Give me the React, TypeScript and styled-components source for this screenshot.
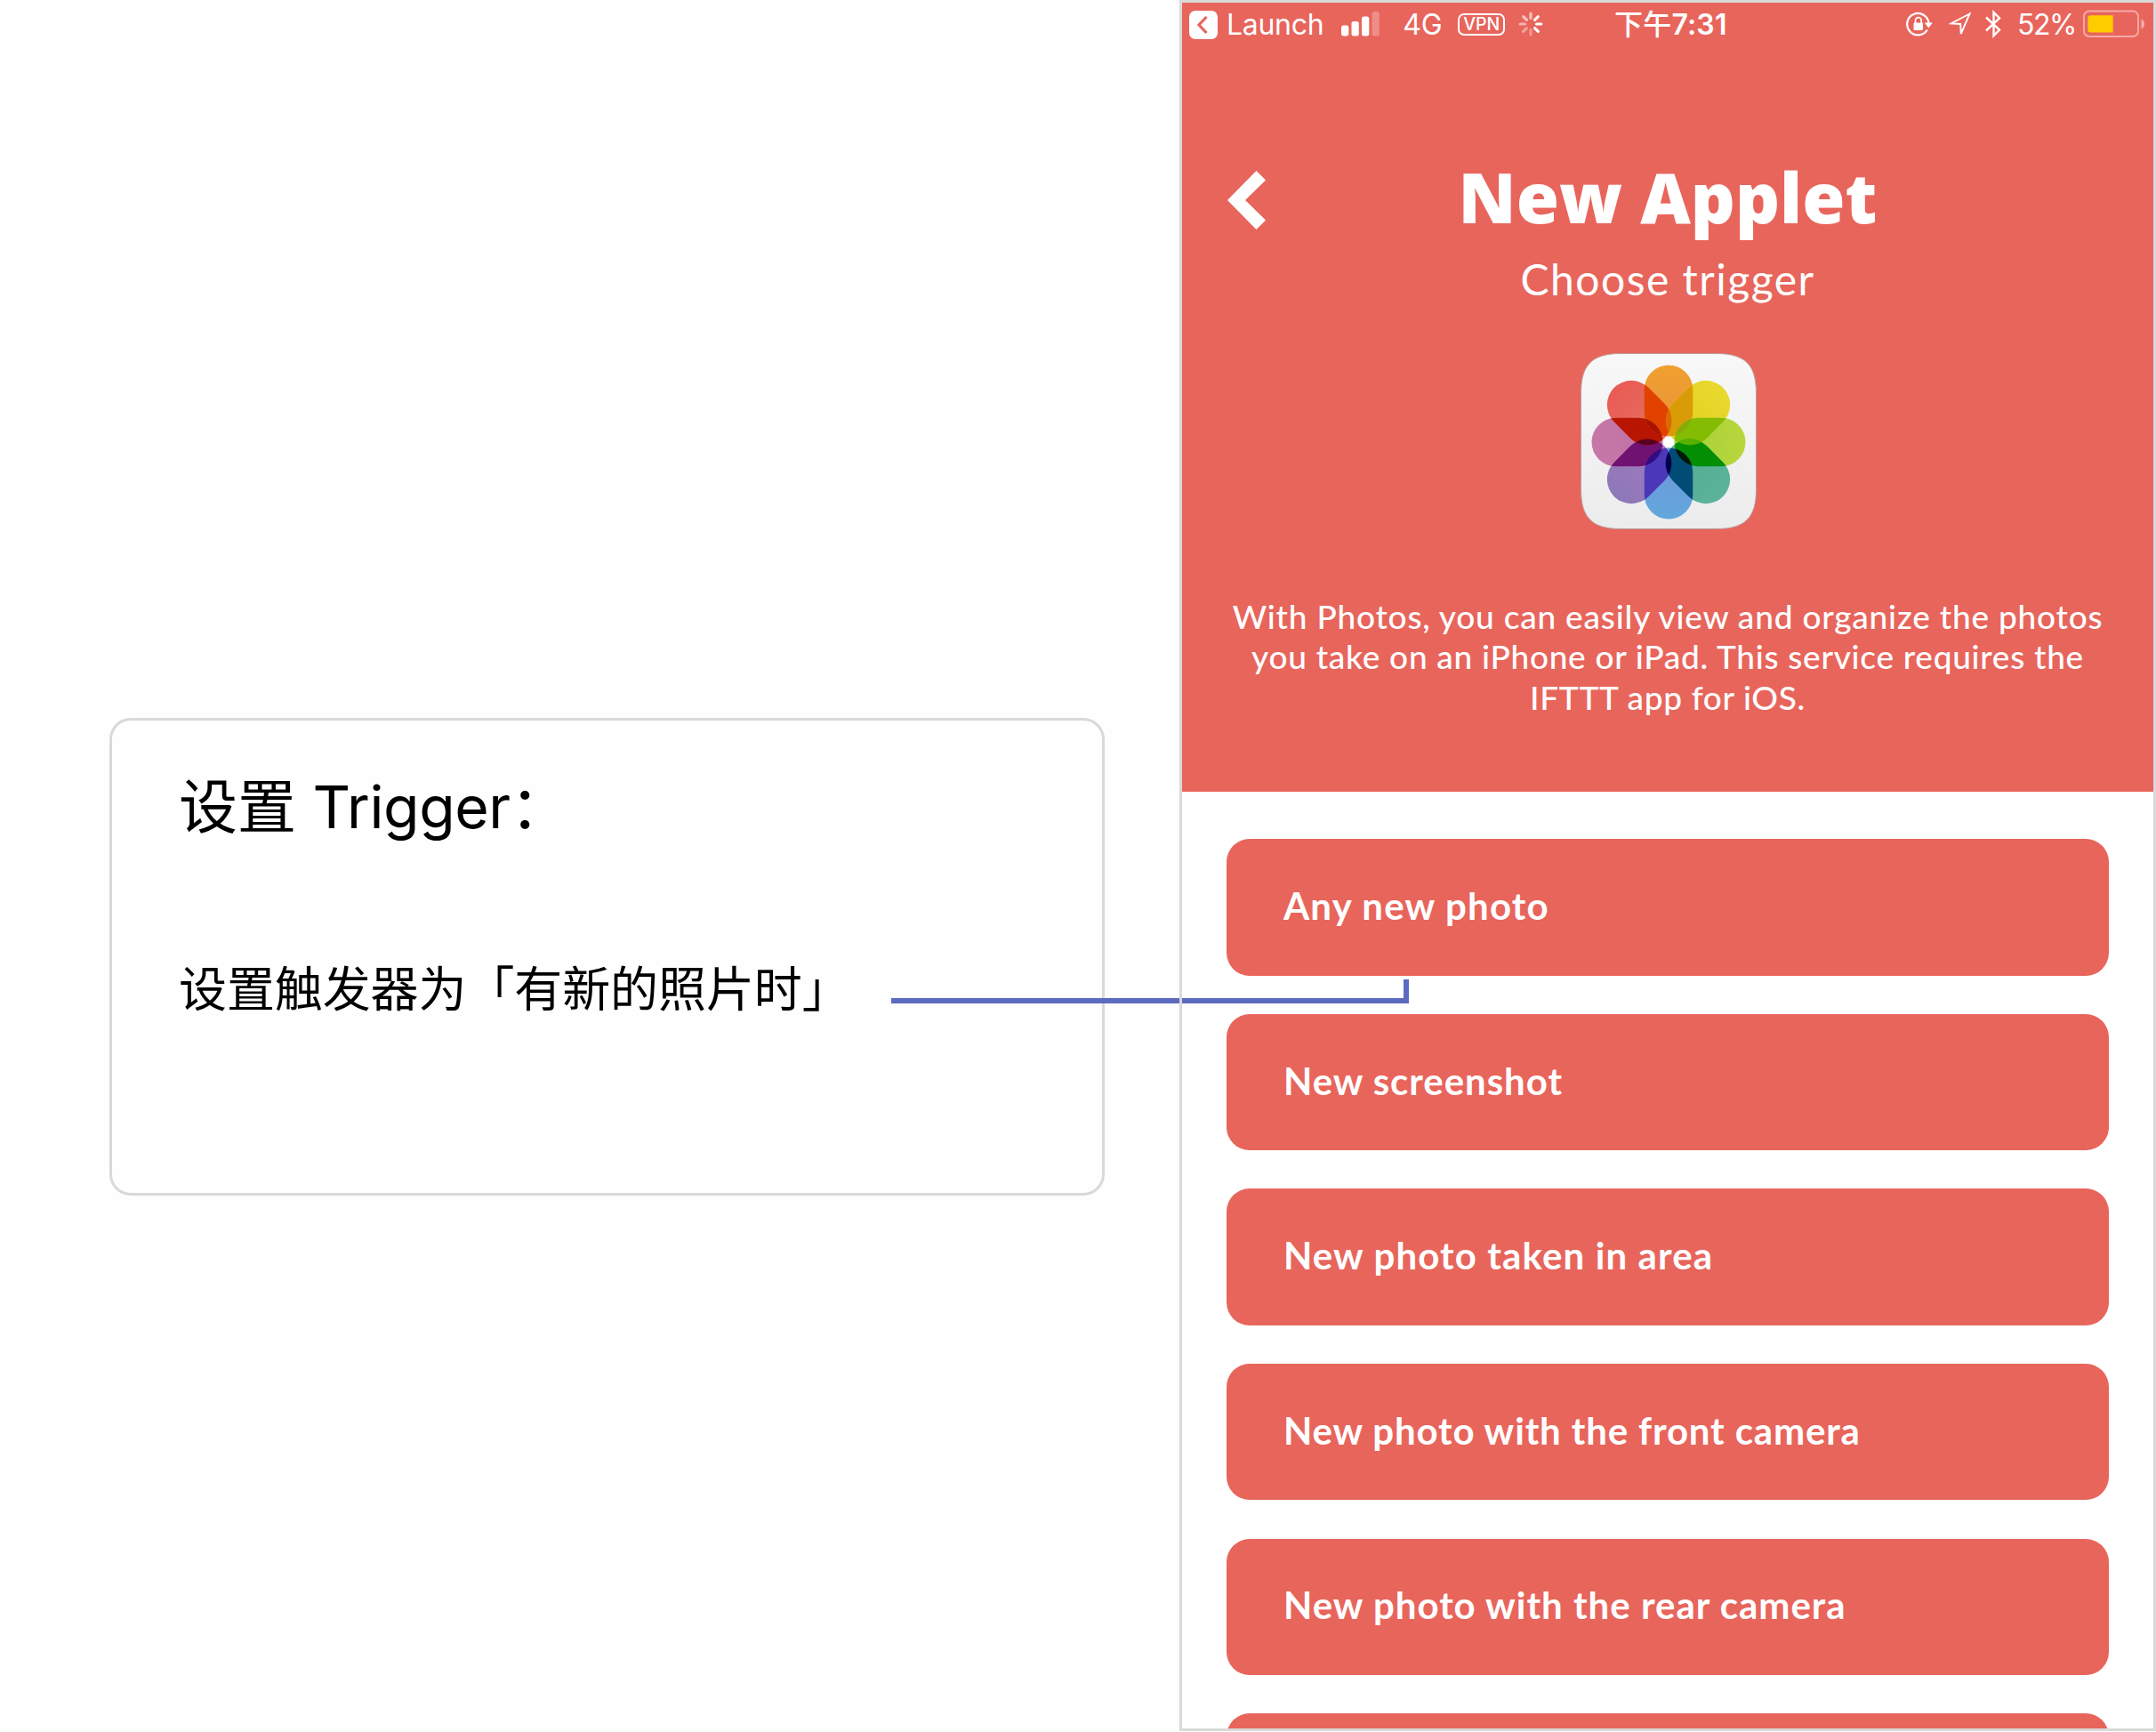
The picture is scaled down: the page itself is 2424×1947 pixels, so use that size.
import React from 'react';
import styled, { createGlobalStyle } from 'styled-components';

const RED = '#e8655c';
const LINE = '#d9d9d9';
const BLUE = '#5c6bc0';

const GlobalStyle = createGlobalStyle`
  *, *::before, *::after { box-sizing: border-box; }
  body { margin: 0; background: #fefefe; overflow: hidden; }
`;

const Stage = styled.main`
  position: relative;
  display: flex;
  justify-content: space-between;
  width: 2424px;
  height: 1947px;
  padding-left: 123px;
  overflow: hidden;
  background: #fefefe;
`;

const Note = styled.section`
  display: flex;
  flex-direction: column;
  width: 1119px;
  height: 537px;
  margin-top: 807px;
  padding: 52px 76px 52px 75px;
  border: 3px solid ${LINE};
  border-radius: 24px;
  font-family: Inter, "Noto Sans CJK SC", sans-serif;
  color: #000;
`;

const NoteTitle = styled.h2`
  margin: 0;
  height: 90px;
  line-height: 90px;
  font-size: 66px;
  font-weight: 400;
  white-space: nowrap;
`;

const Latin = styled.span`
  letter-spacing: -0.4px;
`;

const NoteText = styled.p`
  margin: 121px 0 0;
  height: 80px;
  line-height: 80px;
  font-size: 54px;
  letter-spacing: -0.1px;
  white-space: nowrap;
`;

const Connector = styled.div`
  position: absolute;
  left: 1002px;
  top: 1101px;
  width: 582px;
  height: 27px;
  border-bottom: 6px solid ${BLUE};

  &::before {
    content: '';
    position: absolute;
    left: 324px;
    top: 21px;
    width: 3px;
    height: 6px;
    background: ${LINE};
  }

  &::after {
    content: '';
    position: absolute;
    right: 0;
    top: 0;
    width: 6px;
    height: 27px;
    background: ${BLUE};
  }
`;

const Phone = styled.section`
  display: flex;
  flex-direction: column;
  width: 1098px;
  height: 1946px;
  border: 3px solid ${LINE};
  background: #fff;
  overflow: hidden;
  color: #fff;
`;

const Header = styled.header`
  display: flex;
  flex-direction: column;
  flex: none;
  height: 887px;
  background: ${RED};
`;

const StatusBar = styled.div`
  display: grid;
  grid-template-columns: 478px 1fr auto;
  align-items: center;
  height: 50px;
  padding: 0 9px 0 8px;
  font-family: Inter, "Noto Sans CJK SC", sans-serif;
  font-size: 32px;
`;

const StatusGroup = styled.div`
  display: flex;
  align-items: center;
`;

const StatusText = styled.span<{ $left?: number; $spacing?: number; $bold?: boolean }>`
  margin-left: ${(p) => p.$left ?? 0}px;
  letter-spacing: ${(p) => p.$spacing ?? 0}px;
  font-weight: ${(p) => (p.$bold ? 600 : 400)};
  line-height: 48px;
  white-space: nowrap;
`;

const Meridiem = styled.span`
  font-weight: 500;
`;

const Glyph = styled.svg<{ $left?: number; $raise?: number }>`
  flex: none;
  display: block;
  margin-left: ${(p) => p.$left ?? 0}px;
  margin-bottom: ${(p) => p.$raise ?? 2}px;
`;

const VpnBadge = styled.span`
  display: flex;
  align-items: center;
  justify-content: center;
  width: 53px;
  height: 25px;
  margin: 0 0 2px 18px;
  border: 2px solid #fff;
  border-radius: 7px;
  font-size: 19.5px;
  font-weight: 500;
`;

const TitleRow = styled.div`
  display: grid;
  grid-template-columns: 150px 1fr 150px;
  align-items: center;
  height: 110px;
  margin-top: 117px;
`;

const Title = styled.h1`
  margin: -8px 0 0;
  font-family: "Open Sans", sans-serif;
  font-size: 78px;
  font-weight: 800;
  line-height: 110px;
  text-align: center;
  white-space: nowrap;
`;

const Subtitle = styled.p`
  margin: 2px 0 0;
  height: 64px;
  font-family: Lato, sans-serif;
  font-size: 48px;
  line-height: 64px;
  letter-spacing: 1.5px;
  text-align: center;
`;

const ServiceIcon = styled.svg`
  flex: none;
  align-self: center;
  display: block;
  width: 198px;
  height: 198px;
  margin: 51px 0 0 1px;
`;

const Description = styled.p`
  margin: 75px 0 0;
  font-family: Lato, sans-serif;
  font-size: 37px;
  font-weight: 500;
  line-height: 45.3px;
  text-align: center;
  white-space: nowrap;
`;

const DescriptionLine = styled.span<{ $spacing: number }>`
  display: block;
  letter-spacing: ${(p) => p.$spacing}px;
`;

const TriggerList = styled.ul`
  display: flex;
  flex-direction: column;
  gap: 43.2px;
  margin: 0;
  padding: 53.3px 50px 0;
  list-style: none;
`;

const TriggerButton = styled.li<{ $spacing: number }>`
  display: flex;
  align-items: center;
  flex: none;
  height: 153.4px;
  padding: 0 64px 4px;
  border-radius: 26px;
  background: ${RED};
  font-family: Lato, sans-serif;
  font-size: 42px;
  font-weight: 700;
  letter-spacing: ${(p) => p.$spacing}px;
  white-space: nowrap;
`;

// `next` colours the overlap with the following petal, `second` the one after it.
const petals = [
  { angle: 0, from: '#f0a030', to: '#e8923a', next: '#d99c06', second: '#86ac08' },
  { angle: 45, from: '#ead92e', to: '#e0cf1c', next: '#84bc04', second: '#58b000' },
  { angle: 90, from: '#b9d63c', to: '#a4d03a', next: '#048e04', second: '#001804' },
  { angle: 135, from: '#5cb39b', to: '#52ab8d', next: '#004c74', second: '#00004c' },
  { angle: 180, from: '#62a8dc', to: '#7094dc', next: '#4a38b8', second: '#330c84' },
  { angle: 225, from: '#8d79b8', to: '#a578c0', next: '#701272', second: '#5a0020' },
  { angle: 270, from: '#c778a8', to: '#bc70a4', next: '#b81602', second: '#a81400' },
  { angle: 315, from: '#ea5a55', to: '#e2755f', next: '#e24200', second: '#dc6c00' },
];

const Petal = ({ angle, fill }: { angle: number; fill?: string }) => (
  <rect
    x="71.750"
    y="13.500"
    width="54.500"
    height="80"
    rx="27.250"
    fill={fill}
    transform={`rotate(${angle} 99 100)`}
  />
);

const PhotosIcon = () => (
  <ServiceIcon viewBox="0 0 198 198">
    <defs>
      <linearGradient id="tile" x1="0" y1="0" x2="0" y2="1">
        <stop offset="0" stopColor="#f8f8f8" />
        <stop offset="1" stopColor="#ececec" />
      </linearGradient>
      {petals.map((p) => (
        <React.Fragment key={p.angle}>
          <linearGradient id={`petal${p.angle}`} x1="0" y1="0" x2="0" y2="1">
            <stop offset="0" stopColor={p.from} />
            <stop offset="1" stopColor={p.to} />
          </linearGradient>
          <clipPath id={`clip${p.angle}`}>
            <Petal angle={p.angle} />
          </clipPath>
        </React.Fragment>
      ))}
    </defs>
    <path
      d="M45 .5H153C185 .5 197.500 13 197.500 45V153C197.500 185 185 197.500 153 197.500H45C13 197.500 .5 185 .5 153V45C.5 13 13 .5 45 .5Z"
      fill="url(#tile)"
      stroke="#b9a09e"
      strokeWidth="1"
    />
    {petals.map((p) => (
      <Petal key={p.angle} angle={p.angle} fill={`url(#petal${p.angle})`} />
    ))}
    {petals.map((p) => (
      <g key={p.angle} clipPath={`url(#clip${p.angle})`}>
        <Petal angle={(p.angle + 45) % 360} fill={p.next} />
      </g>
    ))}
    {petals.map((p) => (
      <g key={p.angle} clipPath={`url(#clip${p.angle})`}>
        <Petal angle={(p.angle + 90) % 360} fill={p.second} />
      </g>
    ))}
    <path d="M96.500 94.500h5l3 3v5l-3 3h-5l-3-3v-5z" fill="#fff" />
  </ServiceIcon>
);

const BackToApp = () => (
  <Glyph $raise={0} width="32" height="32" viewBox="0 0 32 32">
    <rect width="32" height="32" rx="7" fill="#fff" />
    <path d="M19.500 7 11 16l8.500 9" fill="none" stroke={RED} strokeWidth="3.200" />
  </Glyph>
);

const Signal = () => (
  <Glyph $left={20} width="43" height="28" viewBox="0 0 43 28" fill="#fff">
    <rect x="0" y="15.500" width="8.300" height="12" rx="2.500" />
    <rect x="11.500" y="11" width="8.300" height="16.500" rx="2.500" />
    <rect x="23" y="5.500" width="8.300" height="22" rx="2.500" />
    <rect x="34.500" y="0" width="8.300" height="27.500" rx="2.500" opacity="0.27" />
  </Glyph>
);

const spokes = [0.6, 0.9, 1, 1, 0.35, 0.4, 0.5, 0.6];

const Spinner = () => (
  <Glyph $left={15} width="28" height="28" viewBox="-14 -14 28 28">
    {spokes.map((opacity, i) => (
      <line
        key={i}
        y1="-6.500"
        y2="-11.800"
        stroke="#fff"
        strokeWidth="3.200"
        strokeLinecap="round"
        opacity={opacity}
        transform={`rotate(${i * 45})`}
      />
    ))}
  </Glyph>
);

const RotationLock = () => (
  <Glyph width="30" height="28" viewBox="0 0 30 28">
    <path d="M23.800 20.500A12.200 12.200 0 1 1 25.500 13" fill="none" stroke="#fff" strokeWidth="2.200" />
    <path d="M20.800 12.500h9l-4.500 6z" fill="#fff" />
    <rect x="8.500" y="12.500" width="10.500" height="8.500" rx="1.200" fill="#fff" />
    <path d="M10.500 13V10a3.300 3.300 0 0 1 6.600 0v3" fill="none" stroke="#fff" strokeWidth="1.800" />
  </Glyph>
);

const Location = () => (
  <Glyph $left={18} width="26" height="28" viewBox="0 0 26 28">
    <path d="M23.500 2.500 2.500 13.400l10.700.6.500 11z" fill="none" stroke="#fff" strokeWidth="1.900" />
  </Glyph>
);

const Bluetooth = () => (
  <Glyph $left={14} width="20" height="34" viewBox="0 0 20 34">
    <path d="M2 9.500 17 23.500 10.500 30V4L17 10.500 2 24.500" fill="none" stroke="#fff" strokeWidth="2.400" />
  </Glyph>
);

const Battery = () => (
  <Glyph $left={8} width="70" height="32" viewBox="0 0 70 32">
    <rect x="1" y="1.500" width="61" height="28.500" rx="6" fill="none" stroke="#fff" strokeWidth="2" opacity="0.45" />
    <path d="M65.500 10.500c4.500 2 4.500 9 0 11z" fill="#fff" opacity="0.5" />
    <path d="M8.500 6.300H33.700V25.500H8.500Q5.300 25.500 5.300 22V9.800Q5.300 6.300 8.500 6.300Z" fill="#ffcc00" />
  </Glyph>
);

const BackArrow = () => (
  <Glyph $left={51} $raise={0} width="45" height="66" viewBox="0 0 45 66">
    <path d="M32.500 0 43 10.500 20 33 43 55.500 32.500 66 0 33Z" fill="#fff" />
  </Glyph>
);

const triggers = [
  { label: 'Any new photo', spacing: 1.2 },
  { label: 'New screenshot', spacing: 0.95 },
  { label: 'New photo taken in area', spacing: 1.13 },
  { label: 'New photo with the front camera', spacing: 0.85 },
  { label: 'New photo with the rear camera', spacing: 1 },
  { label: '', spacing: 0 },
];

export default function App() {
  return (
    <>
      <GlobalStyle />
      <Stage>
        <Note>
          <NoteTitle>
            设置 <Latin>Trigger：</Latin>
          </NoteTitle>
          <NoteText>设置触发器为「有新的照片时」</NoteText>
        </Note>
        <Phone>
          <Header>
            <StatusBar>
              <StatusGroup>
                <BackToApp />
                <StatusText $left={10} $spacing={-0.3}>Launch</StatusText>
                <Signal />
                <StatusText $left={26} $spacing={-0.3}>4G</StatusText>
                <VpnBadge>VPN</VpnBadge>
                <Spinner />
              </StatusGroup>
              <StatusText $bold $spacing={0.2}>
                <Meridiem>下午</Meridiem>7:31
              </StatusText>
              <StatusGroup>
                <RotationLock />
                <Location />
                <Bluetooth />
                <StatusText $left={17} $spacing={-1.5}>52%</StatusText>
                <Battery />
              </StatusGroup>
            </StatusBar>
            <TitleRow>
              <BackArrow />
              <Title>New Applet</Title>
            </TitleRow>
            <Subtitle>Choose trigger</Subtitle>
            <PhotosIcon />
            <Description>
              <DescriptionLine $spacing={0.8}>With Photos, you can easily view and organize the photos</DescriptionLine>
              <DescriptionLine $spacing={0.72}>you take on an iPhone or iPad. This service requires the</DescriptionLine>
              <DescriptionLine $spacing={0.67}>IFTTT app for iOS.</DescriptionLine>
            </Description>
          </Header>
          <TriggerList>
            {triggers.map((t, i) => (
              <TriggerButton key={i} $spacing={t.spacing}>{t.label}</TriggerButton>
            ))}
          </TriggerList>
        </Phone>
        <Connector />
      </Stage>
    </>
  );
}
